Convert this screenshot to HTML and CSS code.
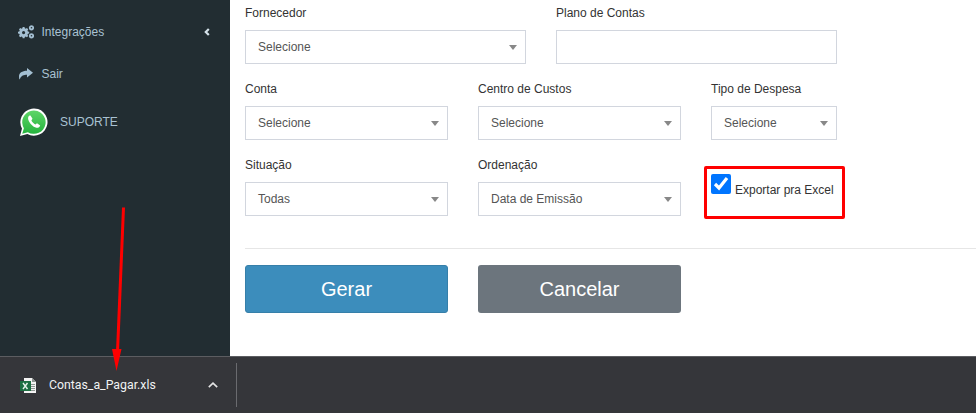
FILE: index.html
```html
<!DOCTYPE html>
<html lang="pt-BR">
<head>
  <meta charset="UTF-8" />
  <title>Contas a Pagar</title>
  <link rel="stylesheet" href="styles.css">
</head>
<body>
  <div class="app">
    <aside class="sidebar">
      <a class="side-link side-link-first" href="#">
        <svg class="side-icon" viewBox="0 0 16 14" width="16" height="14">
          <path fill="#a4bfd2" fill-rule="evenodd" d="M4.700 2h1.800l.3 1.300 1 .4 1.100-.7 1.300 1.300-.7 1.100.4 1 1.300.3v1.800l-1.300.3-.4 1 .7 1.100-1.300 1.300-1.100-.7-1 .4-.3 1.300H4.700l-.3-1.300-1-.4-1.100.7L1 10.900l.7-1.100-.4-1L0 8.500V6.700l1.300-.3.4-1L1 4.300 2.300 3l1.100.7 1-.4zM5.600 6a1.600 1.600 0 1 0 0 3.200 1.600 1.600 0 0 0 0-3.200z"/>
          <circle cx="13.500" cy="2.800" r="1.700" fill="none" stroke="#a4bfd2" stroke-width="1.800"/>
          <circle cx="13.500" cy="10.800" r="1.700" fill="none" stroke="#a4bfd2" stroke-width="1.800"/>
        </svg>
        <span>Integrações</span>
        <svg class="side-caret" viewBox="0 0 6 8" width="6" height="8"><path fill="none" stroke="#d5e2ea" stroke-width="2.200" d="M4.800 1L1.800 4l3 3"/></svg>
      </a>
      <a class="side-link" href="#">
        <svg class="side-icon" viewBox="0 0 14 12" width="14" height="12">
          <path fill="#a4bfd2" d="M8 0l6 4.800-6 4.800V6.800C5 6.800 2 7.500 .8 11.500 .2 11 0 10 0 8.500 0 5 3 2.800 8 2.800z"/>
        </svg>
        <span>Sair</span>
      </a>
      <a class="side-support" href="#">
        <svg class="wa-icon" viewBox="0 0 28 28" width="28" height="28">
          <defs>
            <linearGradient id="wa-green" x1="0" y1="0" x2="0" y2="1">
              <stop offset="0" stop-color="#5fd568"/>
              <stop offset="1" stop-color="#25b33e"/>
            </linearGradient>
          </defs>
          <path fill="#fff" d="M0 28l2-7.400A13.600 13.600 0 1 1 7.400 26z"/>
          <path fill="url(#wa-green)" d="M2.200 25.800l1.700-5.600a11.700 11.700 0 1 1 4 4z"/>
          <path fill="#fff" d="M9.500 7.500c-1.800 1.200-1.900 3.500-.3 6.300 1.600 2.800 3.800 4.900 6.500 5.800 2.200.6 3.900-.4 4.500-2.200l-3.200-2.100-1.600 1.100c-1.600-.8-3.200-2.400-4-4l1.100-1.600-2-3.300z"/>
        </svg>
        <span>SUPORTE</span>
      </a>
    </aside>

    <main class="content">
      <div class="form-row form-row-wide">
        <div class="field">
          <label>Fornecedor</label>
          <div class="select">Selecione</div>
        </div>
        <div class="field">
          <label>Plano de Contas</label>
          <div class="select select-plain"></div>
        </div>
      </div>
      <div class="form-row">
        <div class="field">
          <label>Conta</label>
          <div class="select">Selecione</div>
        </div>
        <div class="field">
          <label>Centro de Custos</label>
          <div class="select">Selecione</div>
        </div>
        <div class="field">
          <label>Tipo de Despesa</label>
          <div class="select">Selecione</div>
        </div>
      </div>
      <div class="form-row">
        <div class="field">
          <label>Situação</label>
          <div class="select">Todas</div>
        </div>
        <div class="field">
          <label>Ordenação</label>
          <div class="select">Data de Emissão</div>
        </div>
        <label class="export-check">
          <input type="checkbox" checked>
          <span>Exportar pra Excel</span>
        </label>
      </div>
      <hr class="divider">
      <div class="form-row">
        <button class="btn btn-primary">Gerar</button>
        <button class="btn btn-secondary">Cancelar</button>
      </div>
    </main>
  </div>

  <footer class="download-bar">
    <div class="download-item">
      <svg class="xls-icon" viewBox="0 0 16 15" width="16" height="15">
        <path fill="#f4f4f4" d="M4 0h8l4 4v11H4z"/>
        <path fill="#8f9692" d="M11 6h4v1h-4zM11 8h4v1h-4zM11 10h4v1h-4zM11 12h4v1h-4zM12 0l4 4h-4z"/>
        <path fill="#1d6f42" d="M0 3h11v10H0z"/>
        <path fill="none" stroke="#e6f2ea" stroke-width="1.400" d="M3 5l4.500 6M7.500 5L3 11"/>
      </svg>
      <span class="file-name">Contas_a_Pagar.xls</span>
      <svg class="chevron" viewBox="0 0 10 6" width="10" height="6"><path fill="none" stroke="#e4e4e4" stroke-width="1.600" d="M.8 5.200L5 1.200l4.200 4"/></svg>
    </div>
  </footer>

  <!-- marcacoes em vermelho por cima da tela -->
  <div class="mark-box"></div>
  <svg class="mark-arrow" viewBox="0 0 20 160" width="20" height="160">
    <path fill="none" stroke="#f00" stroke-width="3" d="M13.500 .5L7.500 145"/>
    <path fill="#f00" d="M2 142h9.500L6.500 164z"/>
  </svg>
</body>
</html>
```

FILE: styles.css
```css
* {
  margin: 0;
  padding: 0;
  box-sizing: border-box;
  font-family: "Liberation Sans", Arial, sans-serif;
}

html, body {
  width: 976px;
  height: 413px;
  overflow: hidden;
  background-color: #fff;
}

body {
  display: flex;
  flex-direction: column;
}

.app {
  display: flex;
  height: 356px;
}

.sidebar {
  width: 230px;
  flex-shrink: 0;
  background-color: #222d32;
  padding: 22px 18px 0;
  display: flex;
  flex-direction: column;
}

.side-link {
  display: flex;
  align-items: center;
  height: 20px;
  margin-bottom: 22px;
  color: #a9c2d2;
  font-size: 12px;
  text-decoration: none;
}

.side-icon {
  width: 16px;
  margin-right: 7.500px;
}

.side-caret {
  margin-left: auto;
  margin-right: 2px;
}

.side-support {
  display: flex;
  align-items: center;
  margin: 2px 0 0 2px;
  color: #a9c2d2;
  font-size: 12px;
  text-decoration: none;
}

.wa-icon {
  margin-right: 12px;
}

.content {
  flex: 1;
  padding: 5px 0 0 15px;
}

.form-row {
  display: flex;
  gap: 30px;
  margin-bottom: 17px;
}

.field {
  width: 203px;
}

.form-row .field:nth-child(3) {
  width: 126px;
}

.form-row-wide .field {
  width: 281px;
}

.field label {
  display: block;
  height: 16px;
  margin-bottom: 9px;
  color: #333;
  font-size: 12px;
  line-height: 16px;
}

.select {
  position: relative;
  height: 34px;
  padding-left: 12px;
  border: 1px solid #d2d6de;
  color: #555;
  font-size: 12px;
  line-height: 32px;
  background-color: #fff;
}

.select::after {
  content: "";
  position: absolute;
  right: 8px;
  top: 14px;
  border-left: 4px solid transparent;
  border-right: 4px solid transparent;
  border-top: 5px solid #888;
}

.select-plain::after {
  display: none;
}

.export-check {
  display: flex;
  align-items: flex-start;
  padding-top: 17px;
  color: #333;
  font-size: 12px;
}

.export-check input {
  width: 20px;
  height: 20px;
  margin-right: 4px;
  accent-color: #0075ff;
}

.export-check span {
  margin-top: 9px;
}

.divider {
  border: 0;
  border-top: 1px solid #e6e6e6;
  margin: 32px 0 16px;
}

.btn {
  width: 203px;
  height: 48px;
  border: 1px solid transparent;
  border-radius: 3px;
  color: #fff;
  font-size: 20px;
}

.btn-primary {
  background-color: #3c8dbc;
  border-color: #367fa9;
}

.btn-secondary {
  background-color: #6c757d;
}

.download-bar {
  height: 57px;
  background-color: #35363a;
  border-top: 1px solid #5c5d61;
  padding-top: 6px;
}

.download-item {
  display: flex;
  align-items: center;
  width: 237px;
  height: 44px;
  padding: 0 18px 0 20px;
  border-right: 1px solid #6a6b6f;
}

.xls-icon {
  margin-right: 13px;
}

.file-name {
  color: #f1f3f4;
  font-family: "Roboto", "Liberation Sans", sans-serif;
  font-size: 12.300px;
}

.chevron {
  margin-left: auto;
}

.mark-box {
  position: absolute;
  left: 704px;
  top: 166px;
  width: 141px;
  height: 53px;
  border: 3px solid #f00;
  border-radius: 2px;
}

.mark-arrow {
  position: absolute;
  left: 110px;
  top: 207px;
  overflow: visible;
}
```
